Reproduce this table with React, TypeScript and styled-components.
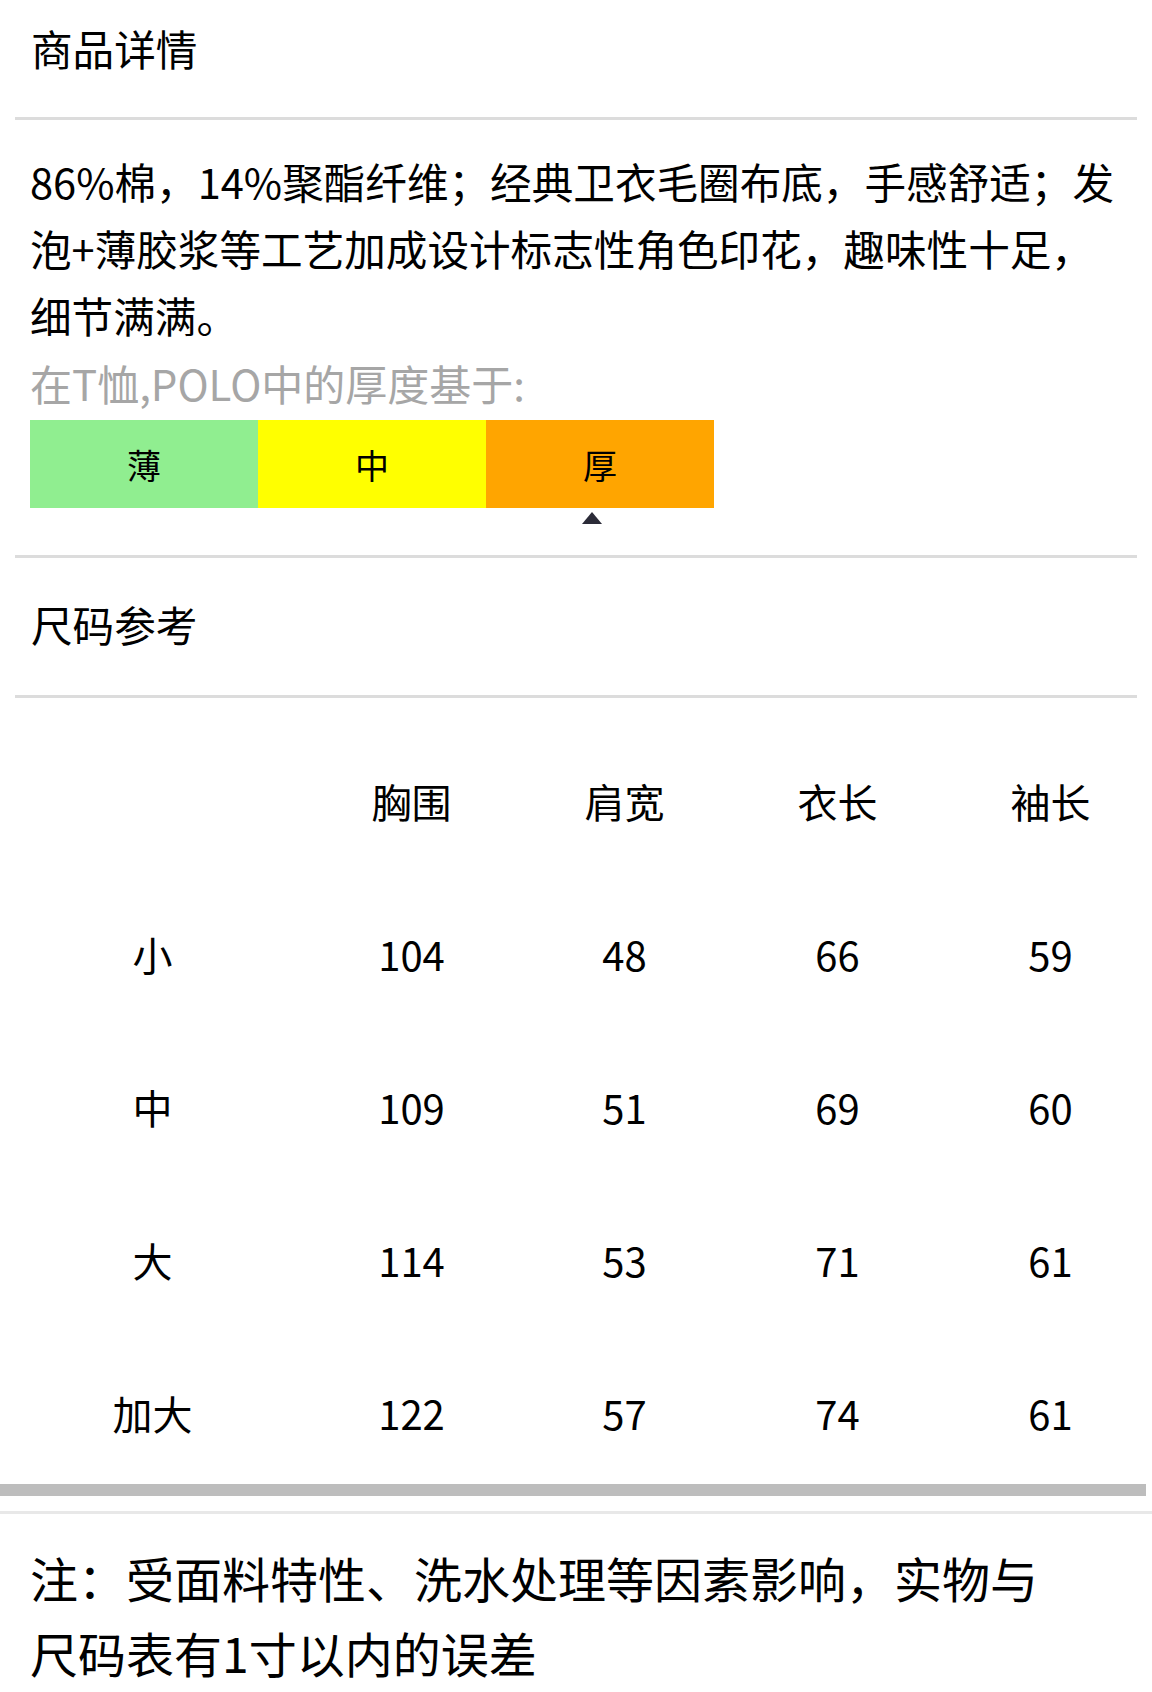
import React from "react";
import styled, { createGlobalStyle } from "styled-components";

const Global = createGlobalStyle`
  html, body { margin: 0; padding: 0; background: #fff; }
  body {
    font-family: "Noto Sans CJK SC", "Noto Sans", sans-serif;
    color: #000;
    overflow-x: hidden;
  }
`;

const Page = styled.div`
  width: 1152px;
  overflow: hidden;
  background: #fff;
`;

const SectionTitle = styled.h2<{ $padTop: number; $padBottom: number }>`
  margin: 0;
  padding: ${(p) => p.$padTop}px 30px ${(p) => p.$padBottom}px 31px;
  font-size: 41.6px;
  line-height: 60px;
  font-weight: 400;
`;

const Divider = styled.div`
  margin: 0 15px;
  height: 3px;
  background: #dcdcdc;
`;

const Description = styled.p`
  margin: 0;
  padding: 28px 0 0 30px;
  width: 1087px;
  font-size: 41.6px;
  line-height: 67px;
`;

const Hint = styled.p`
  margin: 0;
  padding-left: 30px;
  height: 71px;
  font-size: 42px;
  line-height: 67px;
  color: #a6a6a6;
`;

const Scale = styled.div`
  display: grid;
  grid-template-columns: repeat(3, 228px);
  margin-left: 30px;
  height: 88px;
`;

const ScaleCell = styled.div<{ $bg: string }>`
  background: ${(p) => p.$bg};
  display: flex;
  align-items: center;
  justify-content: center;
  font-size: 34px;
`;

const MarkerRow = styled.div`
  height: 47px;
  padding: 4px 0 0 30px;
  box-sizing: border-box;
`;

const Marker = styled.div`
  width: 0;
  height: 0;
  border-left: 10px solid transparent;
  border-right: 10px solid transparent;
  border-bottom: 12px solid #2b2b38;
`;

const SizeTable = styled.div`
  display: grid;
  grid-template-columns: 305px repeat(4, 213px);
  row-gap: 77px;
  padding: 65px 0 33px;
  font-size: 40px;
  line-height: 76px;
`;

const Cell = styled.div`
  text-align: center;
  white-space: nowrap;
`;

const ThickBar = styled.div`
  width: 1146px;
  height: 12px;
  background: #bdbdbd;
  margin-bottom: 15px;
`;

const ThinLine = styled.div`
  height: 3px;
  background: #e8e8e8;
`;

const Note = styled.p`
  margin: 0;
  padding: 26px 0 0 30px;
  width: 1030px;
  font-size: 48px;
  line-height: 75px;
`;

const levels = [
  { label: "薄", color: "#90ee90" },
  { label: "中", color: "#ffff00" },
  { label: "厚", color: "#ffa500" },
];

const headers = ["", "胸围", "肩宽", "衣长", "袖长"];
const rows: (string | number)[][] = [
  ["小", 104, 48, 66, 59],
  ["中", 109, 51, 69, 60],
  ["大", 114, 53, 71, 61],
  ["加大", 122, 57, 74, 61],
];

export default function App() {
  const markerOffset = 552;
  return (
    <Page>
      <Global />
      <SectionTitle $padTop={18} $padBottom={39}>商品详情</SectionTitle>
      <Divider />
      <Description>
        86%棉，14%聚酯纤维；经典卫衣毛圈布底，手感舒适；发泡+薄胶浆等工艺加成设计标志性角色印花，趣味性十足，细节满满。
      </Description>
      <Hint>在T恤,POLO中的厚度基于:</Hint>
      <Scale>
        {levels.map((l) => (
          <ScaleCell key={l.label} $bg={l.color}>
            {l.label}
          </ScaleCell>
        ))}
      </Scale>
      <MarkerRow>
        <Marker style={{ marginLeft: markerOffset }} />
      </MarkerRow>
      <Divider />
      <SectionTitle $padTop={36} $padBottom={41}>尺码参考</SectionTitle>
      <Divider />
      <SizeTable>
        {headers.map((h, i) => (
          <Cell key={"h" + i}>{h}</Cell>
        ))}
        {rows.map((r) =>
          r.map((v, i) => <Cell key={r[0] + "-" + i}>{v}</Cell>)
        )}
      </SizeTable>
      <ThickBar />
      <ThinLine />
      <Note>注：受面料特性、洗水处理等因素影响，实物与尺码表有1寸以内的误差</Note>
    </Page>
  );
}
